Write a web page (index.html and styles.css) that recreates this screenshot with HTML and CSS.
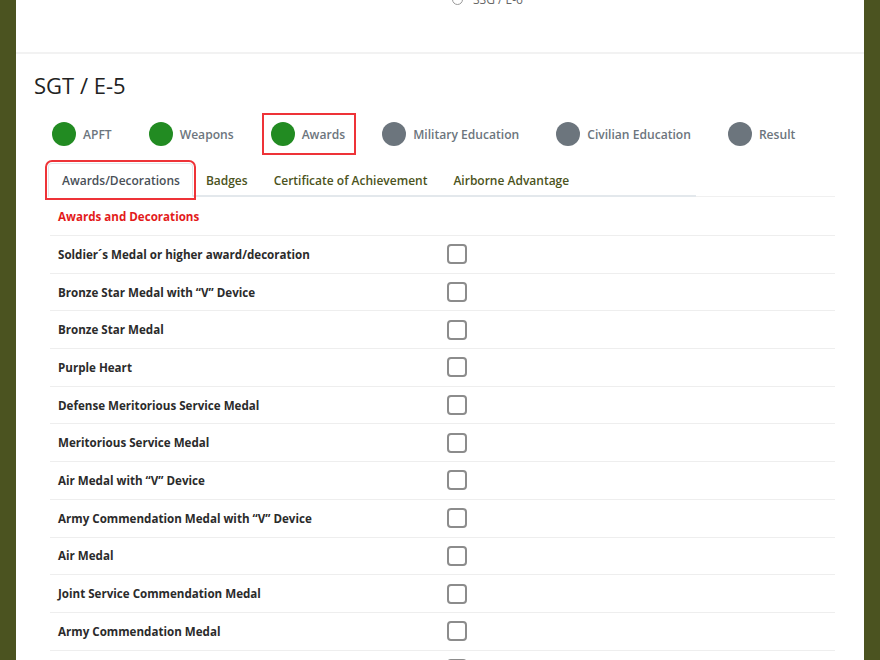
FILE: index.html
```html
<!DOCTYPE html>
<html lang="en">
<head>
    <meta charset="UTF-8">
    <meta name="viewport" content="width=device-width, initial-scale=1.0">
    <title>Promotion Points – SGT / E-5</title>
    <link rel="stylesheet" href="styles.css">
</head>
<body>
    <div class="page">
        <div class="rank-select">
            <label class="rank-option"><span class="radio"></span>SSG / E-6</label>
        </div>

        <section class="rank-section">
            <h2 class="rank-title">SGT / E-5</h2>

            <ul class="steps">
                <li class="step done"><span class="step-dot"></span>APFT</li>
                <li class="step done"><span class="step-dot"></span>Weapons</li>
                <li class="step done current"><span class="step-dot"></span>Awards</li>
                <li class="step"><span class="step-dot"></span>Military Education</li>
                <li class="step"><span class="step-dot"></span>Civilian Education</li>
                <li class="step"><span class="step-dot"></span>Result</li>
            </ul>

            <div class="content">
                <div class="tabs-wrap">
                    <ul class="tabs">
                        <li class="tab active">Awards/Decorations</li>
                        <li class="tab">Badges</li>
                        <li class="tab">Certificate of Achievement</li>
                        <li class="tab">Airborne Advantage</li>
                    </ul>
                </div>

                <div class="award-title">Awards and Decorations</div>

                <div class="award-list">
                    <div class="award-row"><span>Soldier´s Medal or higher award/decoration</span><span class="check"></span></div>
                    <div class="award-row"><span>Bronze Star Medal with “V” Device</span><span class="check"></span></div>
                    <div class="award-row"><span>Bronze Star Medal</span><span class="check"></span></div>
                    <div class="award-row"><span>Purple Heart</span><span class="check"></span></div>
                    <div class="award-row"><span>Defense Meritorious Service Medal</span><span class="check"></span></div>
                    <div class="award-row"><span>Meritorious Service Medal</span><span class="check"></span></div>
                    <div class="award-row"><span>Air Medal with “V” Device</span><span class="check"></span></div>
                    <div class="award-row"><span>Army Commendation Medal with “V” Device</span><span class="check"></span></div>
                    <div class="award-row"><span>Air Medal</span><span class="check"></span></div>
                    <div class="award-row"><span>Joint Service Commendation Medal</span><span class="check"></span></div>
                    <div class="award-row"><span>Army Commendation Medal</span><span class="check"></span></div>
                    <div class="award-row"><span>Joint Service Achievement Medal</span><span class="check"></span></div>
                </div>
            </div>
        </section>
    </div>
</body>
</html>
```

FILE: styles.css
```css
:root {
    --army-green: #4b5320;
    --step-green: #228b22;
    --step-gray: #6c757d;
    --text-color: #212529;
    --line-color: #eeeeee;
    --alert-red: #ee3338;
}
body {
    margin: 0;
    background-color: var(--army-green);
    font-family: 'Open Sans', 'Liberation Sans', sans-serif;
    color: var(--text-color);
}
.page {
    margin: 0 16px;
    min-height: 700px;
    background-color: #fff;
    overflow: hidden;
}
.rank-select {
    display: flow-root;
    height: 52px;
    border-bottom: 2px solid #f2f2f2;
}
.rank-option {
    display: flex;
    align-items: center;
    gap: 10px;
    margin-top: -9px;
    padding-left: 436px;
    font-size: 12px;
    color: #666;
}
.radio {
    width: 9px;
    height: 9px;
    border: 1px solid #999;
    border-radius: 50%;
}
.rank-section {
    padding: 0 29px 0 18px;
}
.rank-title {
    margin: 16px 0 0;
    font-size: 22px;
    font-weight: 500;
    line-height: 30px;
    color: #222;
}
.steps {
    display: flex;
    gap: 17px;
    list-style: none;
    margin: 13px 0 0;
    padding: 0 0 0 9px;
}
.step {
    display: flex;
    align-items: center;
    gap: 7px;
    padding: 7px 9px 7px 7px;
    border: 2px solid transparent;
    font-size: 12.1px;
    font-weight: 600;
    color: var(--step-gray);
    white-space: nowrap;
}
.step.current {
    border-color: var(--alert-red);
}
.step-dot {
    width: 24px;
    height: 24px;
    border-radius: 50%;
    background-color: var(--step-gray);
}
.step.done .step-dot {
    background-color: var(--step-green);
}
.content {
    margin: 8px 0 0 16px;
}
.tabs-wrap {
    border-bottom: 1px solid #f0f0f0;
}
.tabs {
    display: flex;
    list-style: none;
    margin: 0 0 -1px;
    padding: 0;
    width: 646px;
    border-bottom: 2px solid #e3e8ec;
}
.tab {
    padding: 8px 12px 6px;
    margin-bottom: -2px;
    border: 1px solid transparent;
    border-radius: 4px 4px 0 0;
    font-size: 12px;
    font-weight: 600;
    line-height: 18px;
    color: #4b5320;
    white-space: nowrap;
}
.tab.active {
    margin-left: -2px;
    padding-left: 13px;
    color: #495057;
    border-color: #e3e8ec #e3e8ec #fff;
    background-color: #fff;
    outline: 2px solid var(--alert-red);
    outline-offset: 1px;
}
.award-title {
    padding: 11px 8px 9px;
    font-size: 11.6px;
    font-weight: 700;
    line-height: 18px;
    color: #e31b1b;
}
.award-row {
    display: grid;
    grid-template-columns: 397px 1fr;
    align-items: center;
    height: 37.7px;
    box-sizing: border-box;
    border-top: 1px solid var(--line-color);
    padding-left: 8px;
    font-size: 11.6px;
    font-weight: 700;
    color: #2b2b2b;
}
.award-row span:first-child {
    margin-right: -8px;
}
.check {
    width: 16px;
    height: 16px;
    border: 2px solid #8c8c8c;
    border-radius: 4px;
    margin-left: -8px;
}
```
